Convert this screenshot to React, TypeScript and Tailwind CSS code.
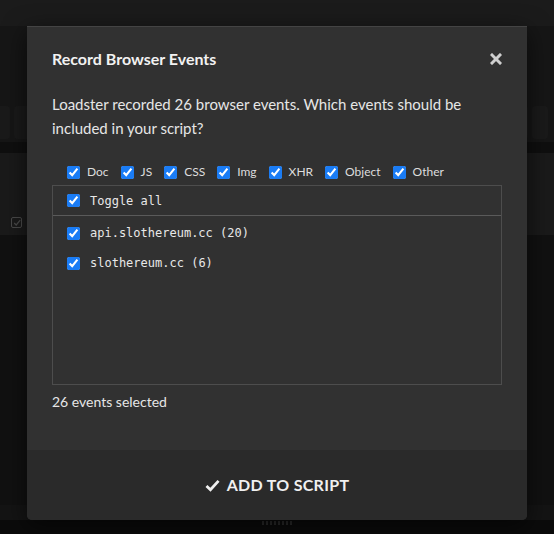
import React from 'react'

const FILTERS = ['Doc', 'JS', 'CSS', 'Img', 'XHR', 'Object', 'Other']
const HOSTS = [
  { name: 'api.slothereum.cc', count: 20 },
  { name: 'slothereum.cc', count: 6 },
]

function Check({ className = '' }: { className?: string }) {
  return (
    <input
      type="checkbox"
      defaultChecked
      className={`m-0 h-[13px] w-[13px] shrink-0 accent-[#1a7cf5] ${className}`}
    />
  )
}

function Backdrop() {
  return (
    <div className="flex h-[534px] w-[554px] flex-col bg-[#161616]">
      <div className="h-[26px] bg-[#1b1b1b]" />
      <div className="h-[77px]" />
      {/* toolbar row */}
      <div className="flex h-[39px] items-stretch gap-[4px] py-[3px] pr-[6px]">
        <div className="w-[10px] rounded-r bg-[#1a1a1a]" />
        <div className="w-[470px] rounded bg-[#1a1a1a]" />
        <div className="flex w-[40px] items-center justify-end rounded bg-[#1a1a1a] pr-[8px] text-[13px] font-bold text-[#3a3a3a]">
          d
        </div>
        <div className="flex-1 rounded bg-[#1a1a1a]" />
      </div>
      <div className="h-[11px] bg-[#0f0f0f]" />
      {/* panel */}
      <div className="flex h-[82px] bg-[#1a1a1a] pl-[11px] pt-[64px]">
        <div className="flex h-[11px] w-[11px] items-center justify-center rounded-[2px] border border-[#4a4a4a] text-[#4a4a4a]">
          <svg viewBox="0 0 10 10" width="8" height="8">
            <path d="M1.5 5 L4 7.5 L9 1.5" fill="none" stroke="currentColor" strokeWidth="1.5" />
          </svg>
        </div>
      </div>
      <div className="flex-1 bg-[#111111]" />
      <div className="h-[15px] bg-[#141414]" />
      <div className="flex h-[14px] justify-center bg-[#0b0b0b] pt-[1px]">
        <div className="h-[4px] w-[30px] bg-[repeating-linear-gradient(90deg,#2a2a2a_0_2px,transparent_2px_4px)]" />
      </div>
    </div>
  )
}

export default function App() {
  return (
    <div className="relative h-[534px] w-[554px] overflow-hidden font-['Lato','Noto_Sans',sans-serif]">
      <Backdrop />

      {/* Modal */}
      <div className="absolute left-[27px] top-[26px] flex h-[494px] w-[500px] flex-col overflow-hidden rounded-b-[5px] border-t border-[#444444] bg-[#313131] shadow-[0_6px_24px_rgba(0,0,0,0.6)]">
        <div className="flex flex-1 flex-col px-[25px]">
          {/* header */}
          <div className="flex items-center justify-between pt-[21px]">
            <h2 className="text-[16px] font-bold leading-[22px] text-[#f2f2f2]">Record Browser Events</h2>
            <button className="mr-[-1px] flex h-[14px] w-[14px] items-center justify-center text-[#cfcfcf]">
              <svg viewBox="0 0 12 12" width="12" height="12">
                <path d="M2 2 L10 10 M10 2 L2 10" stroke="currentColor" strokeWidth="3" strokeLinecap="square" />
              </svg>
            </button>
          </div>

          <p className="mt-[22px] text-[15px] leading-[24px] text-[#e6e6e6]">
            Loadster recorded 26 browser events. Which events should be included in your script?
          </p>

          {/* type filters */}
          <div className="mt-[24px] flex items-center pl-[15px]">
            {FILTERS.map((f) => (
              <label key={f} className="mr-[12px] flex items-center gap-[7px] text-[12px] leading-[16px] text-[#dddddd]">
                <Check />
                <span>{f}</span>
              </label>
            ))}
          </div>

          {/* host list */}
          <div className="mt-[5px] flex h-[200px] flex-col border border-[#4d4d4d] font-['DejaVu_Sans_Mono',monospace] text-[12px] text-[#e8e8e8]">
            <label className="flex h-[30px] items-center gap-[10px] border-b border-[#5a5a5a] pl-[14px]">
              <Check />
              <span>Toggle all</span>
            </label>
            <div className="flex flex-col pt-[2px]">
              {HOSTS.map((h) => (
                <label key={h.name} className="flex h-[30px] items-center gap-[10px] pl-[14px]">
                  <Check />
                  <span>
                    {h.name} ({h.count})
                  </span>
                </label>
              ))}
            </div>
          </div>

          <p className="mt-[8px] text-[14px] leading-[18px] text-[#e6e6e6]">26 events selected</p>
        </div>

        {/* footer */}
        <button className="flex h-[70px] items-center justify-center gap-[7px] bg-[#2a2a2a] text-[16px] font-bold tracking-[0.3px] text-[#f0f0f0]">
          <svg viewBox="0 0 16 14" width="15" height="13">
            <path d="M1.5 7.5 L5.8 11.5 L14.5 2" fill="none" stroke="currentColor" strokeWidth="3" />
          </svg>
          <span>ADD TO SCRIPT</span>
        </button>
      </div>
    </div>
  )
}
